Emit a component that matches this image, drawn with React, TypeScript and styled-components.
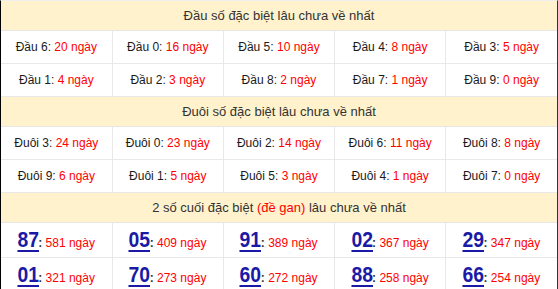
import React from "react";
import styled, { createGlobalStyle } from "styled-components";

const Global = createGlobalStyle`
  html, body { margin: 0; padding: 0; background: #fff; }
  body { font-family: "Liberation Sans", Arial, sans-serif; }
`;

const Frame = styled.div`
  width: 558px;
  height: 289px;
  box-sizing: border-box;
  border-left: 1px solid #000;
  border-right: 1px solid #333;
  border-top: 1px solid #eee;
  overflow: hidden;
`;

const Table = styled.table`
  width: 100%;
  border-collapse: collapse;
  table-layout: fixed;
`;

const HeadCell = styled.th`
  background: #fff2cc;
  color: #333;
  font-weight: normal;
  font-size: 13px;
  height: 29px;
  padding: 0;
  text-align: center;
  border-bottom: 1px solid #e6e6e6;
`;

const Cell = styled.td<{ $tall?: boolean }>`
  height: ${(p) => (p.$tall ? "34px" : "32px")};
  padding: 0;
  text-align: center;
  font-size: 12px;
  color: #1a1a1a;
  border: 1px solid #e8e8e8;
  border-top: none;
  &:first-child { border-left: none; }
  &:last-child { border-right: none; }
  white-space: nowrap;
`;

const Red = styled.span`
  color: #ff0000;
`;

const Big = styled.a`
  display: inline-block;
  color: #1a1aa6;
  font-size: 22px;
  font-weight: bold;
  transform: scaleX(0.88);
  margin: 0 -2px;
  text-decoration: underline;
  text-decoration-thickness: 2px;
  text-underline-offset: 3px;
`;

const Small = styled.span`
  font-size: 12px;
  color: #ff0000;
`;

const Colon = styled.span`
  font-size: 12px;
  color: #333;
  font-weight: bold;
`;

type Pair = [string, string];

const dau1: Pair[] = [["Đầu 6", "20"], ["Đầu 0", "16"], ["Đầu 5", "10"], ["Đầu 4", "8"], ["Đầu 3", "5"]];
const dau2: Pair[] = [["Đầu 1", "4"], ["Đầu 2", "3"], ["Đầu 8", "2"], ["Đầu 7", "1"], ["Đầu 9", "0"]];
const duoi1: Pair[] = [["Đuôi 3", "24"], ["Đuôi 0", "23"], ["Đuôi 2", "14"], ["Đuôi 6", "11"], ["Đuôi 8", "8"]];
const duoi2: Pair[] = [["Đuôi 9", "6"], ["Đuôi 1", "5"], ["Đuôi 5", "3"], ["Đuôi 4", "1"], ["Đuôi 7", "0"]];
const gan1: Pair[] = [["87", "581"], ["05", "409"], ["91", "389"], ["02", "367"], ["29", "347"]];
const gan2: Pair[] = [["01", "321"], ["70", "273"], ["60", "272"], ["88", "258"], ["66", "254"]];

const TextRow = ({ items }: { items: Pair[] }) => (
  <tr>
    {items.map(([l, v]) => (
      <Cell key={l}>
        {l}: <Red>{v} ngày</Red>
      </Cell>
    ))}
  </tr>
);

const GanRow = ({ items }: { items: Pair[] }) => (
  <tr>
    {items.map(([l, v]) => (
      <Cell key={l} $tall>
        <Big>{l}</Big>
        <Colon>: </Colon>
        <Small>{v} ngày</Small>
      </Cell>
    ))}
  </tr>
);

export default function App() {
  return (
    <>
      <Global />
      <Frame>
        <Table>
          <tbody>
            <tr><HeadCell colSpan={5}>Đầu số đặc biệt lâu chưa về nhất</HeadCell></tr>
            <TextRow items={dau1} />
            <TextRow items={dau2} />
            <tr><HeadCell colSpan={5}>Đuôi số đặc biệt lâu chưa về nhất</HeadCell></tr>
            <TextRow items={duoi1} />
            <TextRow items={duoi2} />
            <tr><HeadCell colSpan={5}>2 số cuối đặc biệt <Red>(đề gan)</Red> lâu chưa về nhất</HeadCell></tr>
            <GanRow items={gan1} />
            <GanRow items={gan2} />
          </tbody>
        </Table>
      </Frame>
    </>
  );
}
